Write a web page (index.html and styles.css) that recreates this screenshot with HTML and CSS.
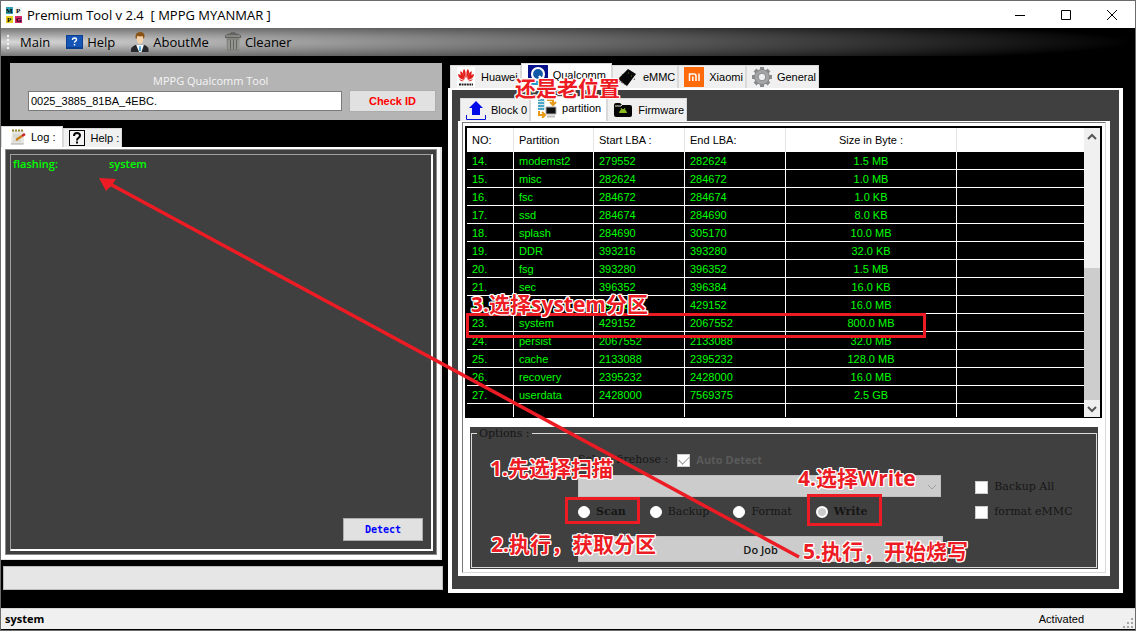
FILE: index.html
```
<!DOCTYPE html>
<html lang="en">
  <head>
    <meta charset="UTF-8" />
    <meta name="viewport" content="width=device-width, initial-scale=1.0" />
    <title>Premium Tool v 2.4 [ MPPG MYANMAR ]</title>
    <link rel="stylesheet" href="styles.css">
  </head>
  <body>
    <header class="titlebar">
      <svg class="logo" width="16" height="16" viewBox="0 0 16 16">
        <rect width="7" height="7" fill="#2fa3b5" />
        <rect x="9" width="7" height="7" fill="#f4f4f4" />
        <rect y="9" width="7" height="7" fill="#e5cf22" />
        <rect x="9" y="9" width="7" height="7" fill="#d12a6c" />
        <text x="0" y="6">M</text>
        <text x="10" y="6">P</text>
        <text x="1" y="15">P</text>
        <text x="10" y="15">G</text>
      </svg>
      <h1>Premium Tool v 2.4&nbsp; [ MPPG MYANMAR ]</h1>
      <div class="window-buttons">
        <button aria-label="Minimize"><svg width="12" height="12"><path d="M1 6.5h10" /></svg></button>
        <button aria-label="Maximize"><svg width="12" height="12"><path d="M1.5 1.5h9v9h-9z" /></svg></button>
        <button aria-label="Close"><svg width="12" height="12"><path d="M1 1l10 10M11 1L1 11" /></svg></button>
      </div>
    </header>

    <nav class="toolbar">
      <span class="grip"></span>
      <button>Main</button>
      <button>
        <svg width="17" height="14" viewBox="0 0 17 14">
          <rect width="17" height="14" fill="#0c3f8f" />
          <rect x="1" y="1" width="15" height="11" fill="#1455b5" />
          <path d="M6.5 5q0-2 2-2t2 1.7q0 1-1 1.5t-1 1.5M8.5 9v1.5" fill="none" stroke="#fff" stroke-width="1.4" />
        </svg>
        Help
      </button>
      <button>
        <svg width="18" height="20" viewBox="0 0 18 20">
          <path d="M0 20v-3q1-3 6-4.500h6q5 1.500 5.500 4.500v3z" fill="#26282c" />
          <path d="M5 12.500L8 20h2.500l2.500-7.500z" fill="#f3f7fb" />
          <path d="M8.300 14h1.400l.3 5H8z" fill="#3fa0d8" />
          <path d="M5.500 4q0 8 3.500 8t3.500-8z" fill="#f3d3ac" />
          <path d="M4.500 6Q4 0 9 0t4.500 5l-1 2-1-3q-3 1-5-.5L5.500 7z" fill="#8a5316" />
        </svg>
        AboutMe
      </button>
      <button>
        <svg width="16" height="20" viewBox="0 0 16 20">
          <path d="M1.500 5h13L14 19.500H2z" fill="#82827e" />
          <path d="M0 3.500Q2 1 8 1t8 2.500V6H0z" fill="#62635f" />
          <path d="M1 4h14" stroke="#a9aaa5" />
          <path d="M4 8v9M7 8v9M10 8v9M13 8v9" stroke="#a9aaa4" />
          <path d="M5.500 8v9M8.500 8v9M11.500 8v9" stroke="#62635f" />
          <path d="M6 1.500q0-1.500 2-1.500t2 1.500" fill="none" stroke="#555" />
        </svg>
        Cleaner
      </button>
    </nav>

    <main>
      <section class="left">
        <form class="check-card">
          <label for="device-id">MPPG Qualcomm Tool</label>
          <div class="check-row">
            <input type="text" id="device-id" value="0025_3885_81BA_4EBC." />
            <button type="button" class="check">Check ID</button>
          </div>
        </form>

        <div class="tabs log-tabs">
          <button class="tab active">
            <svg width="16" height="16" viewBox="0 0 16 16">
              <path d="M2 2h12v13H1z" fill="#e6e6e2" />
              <path d="M1 15h12.500" stroke="#a7a79f" />
              <path d="M2 1.500h12" stroke="#93822c" stroke-width="2" stroke-dasharray="2 1" />
              <path d="M3 6h7M3 8h5M3 12h8" stroke="#c8c8c4" />
              <path d="M6 11l6-4" stroke="#c97d12" stroke-width="2.500" />
              <path d="M12 7l3-2" stroke="#c8242b" stroke-width="2.500" />
            </svg>
            Log :
          </button>
          <button class="tab">
            <svg width="16" height="16" viewBox="0 0 16 16">
              <rect x=".5" y=".5" width="15" height="15" fill="#f4f4f4" stroke="#000" />
              <path d="M5 6q0-3 3-3t3 2.500q0 1.500-1.500 2.300T8 10.500M8 11.500v2" fill="none" stroke="#000" stroke-width="2" />
            </svg>
            Help :
          </button>
        </div>
        <div class="log-panel">
          <div class="log-frame">
            <div class="log">
              <p><span>flashing:</span><span>system</span></p>
              <button class="detect">Detect</button>
            </div>
          </div>
        </div>
        <div class="progress"></div>
      </section>

      <section class="right">
        <div class="tabs">
          <button class="tab">
            <svg width="20" height="20" viewBox="0 0 20 20">
              <rect x="1" width="18" height="20" fill="#fff" />
              <g fill="#e3211c">
                <path d="M9.700 11Q5 6 8 2q2 1 1.700 9zM10.300 11Q15 6 12 2q-2 1-1.700 9z" />
                <path d="M9 12Q3 9 4.500 4Q8 6 9 12zM11 12q6-3 4.500-8Q12 6 11 12z" />
                <path d="M8.500 13Q2 12 2 7q5 1 6.500 6zM11.500 13Q18 12 18 7q-5 1-6.500 6z" />
                <path d="M8 14q-3 1-5-2zM12 14q3 1 5-2z" />
              </g>
              <path d="M3 17.500h14" stroke="#222" stroke-width="2" stroke-dasharray="2 .6" />
            </svg>
            Huawei
          </button>
          <button class="tab active">
            <svg width="20" height="20" viewBox="0 0 20 20">
              <rect width="20" height="20" fill="#06118c" />
              <path d="M0 13h20v7H0z" fill="#2298c8" />
              <circle cx="10" cy="9" r="6" fill="#125aa8" stroke="#fff" stroke-width="2.200" />
              <path d="M11 11l4 5" stroke="#fff" stroke-width="2.200" />
            </svg>
            Qualcomm
          </button>
          <button class="tab">
            <svg width="20" height="20" viewBox="0 0 20 20">
              <path d="M0 12L10 2l8 5-9 12z" fill="#070707" />
              <path d="M1 14l7 4M5 8l-2-1M17 12l-2 1" stroke="#333" stroke-dasharray="1 1" />
              <path d="M10 6h1M13 9h1" stroke="#64722b" />
            </svg>
            eMMC
          </button>
          <button class="tab">
            <svg width="20" height="20" viewBox="0 0 20 20">
              <rect width="20" height="20" fill="#ff6a0a" />
              <path d="M5.500 14V7H10q2 0 2 2v5M8.800 9.500V14M15 6.500V14" fill="none" stroke="#fff" stroke-width="1.500" />
            </svg>
            Xiaomi
          </button>
          <button class="tab">
            <svg width="20" height="20" viewBox="0 0 20 20">
              <g stroke="#898b8c" stroke-width="4">
                <path d="M10 0v20M0 10h20M3 3l14 14M17 3L3 17" />
              </g>
              <circle cx="10" cy="10" r="7.500" fill="#a3a5a6" stroke="#86888a" />
              <circle cx="10" cy="10" r="3.800" fill="#f0f0f0" stroke="#858789" />
            </svg>
            General
          </button>
        </div>

        <div class="chip-panel">
          <div class="tabs inner-tabs">
            <button class="tab">
              <svg width="20" height="20" viewBox="0 0 20 20">
                <path d="M10 1l7 7h-3v7H6V8H3z" fill="#0009e8" />
                <path d="M.5 15v4.500h19V15" fill="none" stroke="#0712d8" />
              </svg>
              Block 0
            </button>
            <button class="tab active">
              <svg width="20" height="20" viewBox="0 0 20 20">
                <path d="M1 1h7v11H1z" fill="#d8e6ec" />
                <path d="M1 2h6M1 5h6M1 8h6M1 11h6" stroke="#1f91b5" stroke-width="1.500" />
                <path d="M10 2h6v4M13 4l3 3 3-3M2 13v4h5M5 14l3 3-3 3" fill="none" stroke="#e89a16" stroke-width="2" />
                <path d="M9 9h10v7H9z" fill="#111" stroke="#aaa" />
                <path d="M10 18.500h8" stroke="#bbb" stroke-width="2" />
              </svg>
              partition
            </button>
            <button class="tab">
              <svg width="20" height="20" viewBox="0 0 20 20">
                <path d="M1 5q0-2 2-2h4l2 2h8q2 0 2 2v8q0 2-2 2H3q-2 0-2-2z" fill="#050505" />
                <path d="M2 6h6l1-1" fill="none" stroke="#dfe8d4" />
                <path d="M6 13q1-4 4-4t4 4z" fill="#8cbd22" />
                <path d="M8 8l1 2M12 8l-1 2" stroke="#8cbd22" />
              </svg>
              Firmware
            </button>
          </div>

          <div class="partition-panel">
            <div class="partition-frame">
              <div class="table-box">
                <table>
                  <colgroup>
                    <col class="col-no" />
                    <col class="col-name" />
                    <col class="col-start" />
                    <col class="col-end" />
                    <col class="col-size" />
                    <col />
                  </colgroup>
                  <thead>
                    <tr><th>NO:</th><th>Partition</th><th>Start LBA :</th><th>End LBA:</th><th class="size">Size in Byte :</th><th></th></tr>
                  </thead>
                  <tbody>
                    <tr><td>14.</td><td>modemst2</td><td>279552</td><td>282624</td><td class="size">1.5 MB</td><td></td></tr>
                    <tr><td>15.</td><td>misc</td><td>282624</td><td>284672</td><td class="size">1.0 MB</td><td></td></tr>
                    <tr><td>16.</td><td>fsc</td><td>284672</td><td>284674</td><td class="size">1.0 KB</td><td></td></tr>
                    <tr><td>17.</td><td>ssd</td><td>284674</td><td>284690</td><td class="size">8.0 KB</td><td></td></tr>
                    <tr><td>18.</td><td>splash</td><td>284690</td><td>305170</td><td class="size">10.0 MB</td><td></td></tr>
                    <tr><td>19.</td><td>DDR</td><td>393216</td><td>393280</td><td class="size">32.0 KB</td><td></td></tr>
                    <tr><td>20.</td><td>fsg</td><td>393280</td><td>396352</td><td class="size">1.5 MB</td><td></td></tr>
                    <tr><td>21.</td><td>sec</td><td>396352</td><td>396384</td><td class="size">16.0 KB</td><td></td></tr>
                    <tr><td>22.</td><td>boot</td><td>396384</td><td>429152</td><td class="size">16.0 MB</td><td></td></tr>
                    <tr><td>23.</td><td>system</td><td>429152</td><td>2067552</td><td class="size">800.0 MB</td><td></td></tr>
                    <tr><td>24.</td><td>persist</td><td>2067552</td><td>2133088</td><td class="size">32.0 MB</td><td></td></tr>
                    <tr><td>25.</td><td>cache</td><td>2133088</td><td>2395232</td><td class="size">128.0 MB</td><td></td></tr>
                    <tr><td>26.</td><td>recovery</td><td>2395232</td><td>2428000</td><td class="size">16.0 MB</td><td></td></tr>
                    <tr><td>27.</td><td>userdata</td><td>2428000</td><td>7569375</td><td class="size">2.5 GB</td><td></td></tr>
                    <tr class="blank"><td></td><td></td><td></td><td></td><td></td><td></td></tr>
                  </tbody>
                </table>
                <div class="scrollbar">
                  <svg width="16" height="17"><path d="M4 11l4-4 4 4" /></svg>
                  <span class="thumb"></span>
                  <svg width="16" height="17"><path d="M4 7l4 4 4-4" /></svg>
                </div>
              </div>

              <form class="options">
                <fieldset>
                  <legend>Options :</legend>
                  <div class="job">
                    <div class="firehose">
                      <label for="firehose">Select firehose :</label>
                      <label class="auto"><input type="checkbox" checked disabled />Auto Detect</label>
                    </div>
                    <div class="select-wrap">
                      <select id="firehose" disabled><option></option></select>
                      <svg width="10" height="6"><path d="M1 1l4 4 4-4" /></svg>
                    </div>
                    <div class="modes">
                      <label class="strong"><input type="radio" name="mode" />Scan</label>
                      <label><input type="radio" name="mode" />Backup</label>
                      <label><input type="radio" name="mode" />Format</label>
                      <label class="strong"><input type="radio" name="mode" checked />Write</label>
                    </div>
                    <button type="button" class="do-job">Do Job</button>
                  </div>
                  <div class="extras">
                    <label><input type="checkbox" />Backup All</label>
                    <label><input type="checkbox" />format eMMC</label>
                  </div>
                </fieldset>
              </form>
            </div>
          </div>
        </div>
      </section>
    </main>

    <footer class="statusbar">
      <strong>system</strong>
      <span>Activated</span>
      <svg width="11" height="11" viewBox="0 0 11 11">
        <path d="M9 0h2v2H9zM5 4h2v2H5zM9 4h2v2H9zM1 8h2v2H1zM5 8h2v2H5zM9 8h2v2H9z" fill="#a5a5a5" />
      </svg>
    </footer>

    <!-- tutorial notes drawn over the window -->
    <div class="notes">
      <svg width="1136" height="631" viewBox="0 0 1136 631">
        <g fill="none" stroke="#ed1c24" stroke-width="3">
          <rect x="467.500" y="314.500" width="457" height="22" />
          <rect x="566.500" y="498.500" width="72" height="24" />
          <rect x="808.500" y="495.500" width="72" height="29" />
          <path d="M110 184L799 557" stroke-width="3.500" />
        </g>
        <path d="M99 178l17 1-4 6-6 6z" fill="#ed1c24" />
      </svg>
      <span class="note note-tab">还是老位置</span>
      <span class="note note-1">1.先选择扫描</span>
      <span class="note note-2">2.执行，获取分区</span>
      <span class="note note-3">3.选择system分区</span>
      <span class="note note-4">4.选择Write</span>
      <span class="note note-5">5.执行，开始烧写</span>
    </div>
  </body>
</html>
```
FILE: styles.css
```
* {
  box-sizing: border-box;
}

body {
  position: relative;
  margin: 0;
  min-height: 100vh;
  display: flex;
  flex-direction: column;
  border: 1px solid #6b6b6b;
  background: #000;
  color: #000;
  font-family: "Liberation Sans", Arial, sans-serif;
  font-size: 11px;
  line-height: 16px;
}

button,
input,
select {
  font: inherit;
  color: inherit;
  margin: 0;
}

svg {
  flex: none;
}

/* Title bar */
.titlebar {
  height: 27px;
  display: flex;
  align-items: center;
  gap: 5px;
  padding-left: 5px;
  background: #fff;
}

.logo text {
  font: bold 7px "Liberation Serif", serif;
}

.titlebar h1 {
  flex: 1;
  margin: 0;
  font: 13px/20px "Open Sans", sans-serif;
}

.window-buttons {
  display: flex;
}

.window-buttons button {
  width: 46px;
  height: 26px;
  padding: 0;
  border: 0;
  background: none;
}

.window-buttons svg {
  display: block;
  margin: auto;
  fill: none;
  stroke: #000;
}

/* Toolbar */
.toolbar {
  height: 28px;
  display: flex;
  align-items: center;
  gap: 16px;
  padding-left: 6px;
  background: radial-gradient(ellipse 100% 110% at 0 50%, #d8d8d8, #000);
}

.toolbar button {
  display: flex;
  align-items: center;
  gap: 4px;
  padding: 0;
  border: 0;
  background: none;
  font: 13px "Open Sans", sans-serif;
}

.grip {
  width: 2px;
  height: 15px;
  margin-right: -5px;
  background: repeating-linear-gradient(#f4f4f4 0 2px, transparent 2px 4px);
}

/* Main area */
main {
  flex: 1;
  display: grid;
  grid-template-columns: 442fr 675fr;
  gap: 5px;
  padding: 7px 12px 0 0;
}

.left,
.right {
  display: flex;
  flex-direction: column;
  min-width: 0;
}

.left {
  padding-bottom: 18px;
}

.right {
  padding-bottom: 15px;
}

/* Device check */
.check-card {
  height: 57px;
  margin: 0 1px 0 9px;
  padding: 9px 6px 0 18px;
  background: #b4b4b4;
}

.check-card label {
  display: block;
  margin-left: 125px;
  color: #f5f5f5;
  font: 11px/18px "Open Sans", sans-serif;
}

.check-row {
  display: flex;
  align-items: center;
  gap: 7px;
}

.check-row input {
  flex: 1;
  min-width: 0;
  height: 20px;
  padding: 0 2px;
  border: 1px solid #7a7a7a;
  background: #fff;
}

.check,
.detect {
  border: 1px solid #adadad;
  background: #e1e1e1;
  font-weight: bold;
}

.check {
  width: 87px;
  height: 22px;
  color: #f00;
  font-size: 11px;
}

/* Tabs */
.tabs {
  height: 25px;
  display: flex;
  align-items: flex-end;
  padding-left: 2px;
}

.tab {
  height: 23px;
  display: flex;
  align-items: center;
  gap: 5px;
  padding: 0 2px 0 5px;
  border: 1px solid #d9d9d9;
  border-bottom: 0;
  background: #f0f0f0;
}

.tab.active {
  height: 25px;
  padding: 0 5px 2px 6px;
  background: #fff;
}

.log-tabs {
  height: 21px;
  margin-top: 6px;
  padding-left: 0;
}

.log-tabs .tab {
  height: 19px;
}

.log-tabs .tab.active {
  height: 21px;
  padding: 0 7px 0 8px;
}

/* Log */
.log-panel {
  flex: 1;
  display: flex;
  margin-right: 1px;
  padding: 2px 3px 4px 4px;
  border: solid #e3e3e3;
  border-width: 0 2px 1px 0;
  background: #fff;
}

.log-frame {
  flex: 1;
  display: flex;
  padding: 4px 3px 3px 4px;
  border: 1px solid #8a8a8a;
  background: #404040;
}

.log {
  flex: 1;
  display: flex;
  flex-direction: column;
  justify-content: space-between;
  padding: 1px 8px 8px 2px;
  border: 1px solid #a0a0a0;
  border-right: 2px solid #fff;
  border-bottom: 2px solid #fff;
  color: #0f0;
}

.log p {
  display: flex;
  margin: 0;
  font: 600 11px/16px "Open Sans", sans-serif;
}

.log p span {
  width: 96px;
}

.detect {
  align-self: flex-end;
  width: 80px;
  height: 23px;
  color: #00f;
  font-family: "DejaVu Sans Mono", monospace;
  font-size: 10px;
}

.progress {
  height: 24px;
  margin: 6px 0 0 2px;
  border: 1px solid #bcbcbc;
  background: #e6e6e6;
}

/* Right side panels */
.chip-panel {
  flex: 1;
  display: flex;
  flex-direction: column;
  padding: 6px 9px 13px 6px;
  border: solid #fff;
  border-width: 2px 4px 4px;
  background: #404040;
}

.partition-panel {
  flex: 1;
  display: flex;
  padding: 1px 4px 3px;
  background: #fff;
}

.partition-frame {
  flex: 1;
  display: flex;
  flex-direction: column;
  min-width: 0;
  padding: 3px 3px 3px 2px;
  border: 1px solid #777;
  border-right-color: #d9d9d9;
  border-bottom-color: #d9d9d9;
}

/* Partition table */
.table-box {
  display: flex;
  height: 292px;
  border: 1px solid #000;
  border-width: 2px 2px 1px;
  background: #000;
}

table {
  flex: 1;
  table-layout: fixed;
  border-spacing: 0;
  color: #0f0;
}

.col-no {
  width: 47px;
}

.col-name {
  width: 80px;
}

.col-start {
  width: 91px;
}

.col-end {
  width: 101px;
}

.col-size {
  width: 171px;
}

th {
  height: 24px;
  padding: 0 5px;
  border-right: 1px solid #e5e5e5;
  background: #fff;
  color: #000;
  font-weight: normal;
  text-align: left;
}

td {
  height: 18px;
  padding: 0 5px;
  border-right: 1px solid #fff;
  border-bottom: 1px solid #fff;
  white-space: nowrap;
}

th.size,
td.size {
  text-align: center;
}

th:last-child,
td:last-child {
  border-right: 0;
}

.blank td {
  height: 13px;
  border-bottom: 0;
}

.scrollbar {
  width: 16px;
  display: flex;
  flex-direction: column;
  background: #f0f0f0;
}

.scrollbar svg {
  fill: none;
  stroke: #555;
  stroke-width: 2;
}

.thumb {
  flex: 1;
  margin-top: 123px;
  background: #cdcdcd;
}

/* Options */
.options {
  flex: 1;
  margin: 9px 4px 0 5px;
  padding: 0 1px 1px;
  background: #404040;
  color: #161616;
  font-family: "DejaVu Serif", serif;
}

fieldset {
  display: grid;
  grid-template-columns: 366fr 121fr;
  column-gap: 32px;
  margin: 0;
  padding: 12px 0 5px 106px;
  border: 1px solid #dcdcdc;
}

legend {
  margin-left: -101px;
  padding: 0 2px;
  line-height: 13px;
}

.options label {
  display: flex;
  align-items: center;
  gap: 6px;
  white-space: nowrap;
}

.options input {
  appearance: none;
  flex: none;
  width: 13px;
  height: 13px;
  border: 1px solid #ccc;
  background: #fff;
}

.options input[type="radio"] {
  width: 12px;
  height: 12px;
  border-color: #fff;
  border-radius: 50%;
}

.options input[type="radio"]:checked {
  border-width: 2px;
  background: #ccc;
}

.options .auto {
  color: #5a5a5a;
  font-family: "Noto Sans", sans-serif;
  font-weight: bold;
}

.auto input {
  position: relative;
}

.auto input::after {
  content: "";
  position: absolute;
  left: 1px;
  top: 1px;
  width: 9px;
  height: 5px;
  border: solid #999;
  border-width: 0 0 1px 1px;
  transform: rotate(-45deg);
}

.firehose {
  display: flex;
  gap: 9px;
}

.select-wrap {
  position: relative;
  margin: 7px 2px 6px 0;
}

.options select {
  appearance: none;
  display: block;
  width: 100%;
  height: 22px;
  border: 1px solid #bfbfbf;
  border-radius: 0;
  background: #ccc;
  opacity: 1;
}

.select-wrap svg {
  position: absolute;
  right: 4px;
  top: 9px;
  fill: none;
  stroke: #a0a0a0;
}

.modes {
  display: flex;
  gap: 24px;
  line-height: 18px;
}

.strong {
  font-weight: bold;
}

.do-job {
  display: block;
  width: 100%;
  height: 26px;
  margin-top: 15px;
  border: 1px solid #bfbfbf;
  background: #ccc;
  font: 600 11px "Open Sans", sans-serif;
}

.extras {
  display: flex;
  flex-direction: column;
  gap: 9px;
  padding-top: 27px;
}

/* Status bar */
.statusbar {
  height: 22px;
  display: flex;
  align-items: center;
  padding: 0 2px 0 4px;
  border-top: 1px solid #d7d7d7;
  border-bottom: 1px solid #000;
  background: #f0f0f0;
}

.statusbar strong {
  flex: 1;
  font: bold 11px/20px "Open Sans", sans-serif;
}

.statusbar svg {
  align-self: flex-end;
  margin-left: 38px;
}

/* Notes over the window */
.notes {
  position: absolute;
  top: -1px;
  left: -1px;
  pointer-events: none;
}

.notes svg {
  display: block;
}

.note {
  position: absolute;
  color: #ed1c24;
  font: bold 21px/28px "Open Sans", "Noto Sans CJK SC", sans-serif;
  white-space: nowrap;
  text-shadow: -1px -1px #fff, 1px -1px #fff, -1px 1px #fff, 1px 1px #fff,
    0 1px #fff, 0 -1px #fff, 1px 0 #fff, -1px 0 #fff;
}

.note-tab {
  left: 515px;
  top: 74px;
}

.note-1 {
  left: 490px;
  top: 454px;
}

.note-2 {
  left: 491px;
  top: 530px;
}

.note-3 {
  left: 471px;
  top: 290px;
}

.note-4 {
  left: 798px;
  top: 464px;
}

.note-5 {
  left: 803px;
  top: 537px;
}
```
